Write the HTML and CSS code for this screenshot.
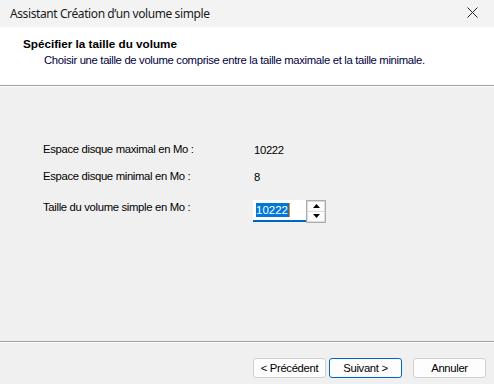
FILE: index.html
```html
<!DOCTYPE html>
<html>
<head>
    <title>Assistant Création d'un volume simple</title>
    <link rel="stylesheet" href="styles.css">
</head>
<body>
    <div class="wizard">
        <div class="titlebar">
            <span class="titlebar__text">Assistant Création d’un volume simple</span>
            <span class="titlebar__close">
                <svg width="11" height="11" viewBox="0 0 11 11"><path d="M0.5 0.5 L10.5 10.5 M10.5 0.5 L0.5 10.5" stroke="#222" stroke-width="1"/></svg>
            </span>
        </div>
        <div class="header">
            <div class="header__title">Spécifier la taille du volume</div>
            <div class="header__sub">Choisir une taille de volume comprise entre la taille maximale et la taille minimale.</div>
        </div><!-- end header -->
        <div class="content">
            <div class="fields">
                <label>Espace disque maximal en Mo :</label>
                <span class="value">10222</span>
                <label>Espace disque minimal en Mo :</label>
                <span class="value">8</span>
                <label>Taille du volume simple en Mo :</label>
                <div class="spin">
                    <div class="spin__input"><span class="spin__sel">10222</span><span class="spin__caret"></span></div>
                    <div class="spin__btns">
                        <span class="spin__btn"><svg width="7" height="4" viewBox="0 0 7 4"><path d="M3.5 0 L7 4 L0 4 Z" fill="#000"/></svg></span>
                        <span class="spin__btn"><svg width="7" height="4" viewBox="0 0 7 4"><path d="M0 0 L7 0 L3.5 4 Z" fill="#000"/></svg></span>
                    </div>
                </div>
            </div>
        </div><!-- end content -->
        <div class="footer">
            <a href="#" class="btn">&lt; Précédent</a>
            <a href="#" class="btn btn--default">Suivant &gt;</a>
            <a href="#" class="btn btn--cancel">Annuler</a>
        </div>
    </div>
</body>
</html>
```

FILE: styles.css
```css
html, body {
    margin: 0;
    font-family: 'Liberation Sans', Arial, sans-serif;
    font-size: 11.3px;
    letter-spacing: -0.33px;
    color: #000;
}

.wizard {
    display: flex;
    flex-direction: column;
    width: 494px;
    height: 384px;
    background: #f0f0f0;
}

.titlebar {
    display: flex;
    align-items: center;
    justify-content: space-between;
    height: 27px;
    padding: 0 16px 0 10px;
    background: #f3f3f3;
    font-family: 'Noto Sans', sans-serif;
    font-size: 12px;
    letter-spacing: -0.4px;
    color: #1a1a1a;
}

.titlebar__close {
    display: flex;
    margin-top: -2px;
}

.header {
    height: 59px;
    padding: 0 0 0 23px;
    background: #fff;
    border-bottom: 1px solid #a0a0a0;
    box-sizing: border-box;
}

.header__title {
    margin-top: 10px;
    font-weight: 700;
    font-size: 11.7px;
    letter-spacing: 0;
    line-height: 14px;
}

.header__sub {
    margin-top: 2px;
    padding-left: 21px;
    line-height: 14px;
    color: #000040;
}

.content {
    flex: 1;
    padding: 56px 0 0 43px;
    border-top: 1px solid #fff;
    border-bottom: 1px solid #a0a0a0;
}

.fields {
    display: grid;
    grid-template-columns: 210px auto;
    grid-template-rows: 14px 14px 22px;
    row-gap: 13px;
    align-items: center;
}

.fields label {
    align-self: start;
}

.fields label:nth-of-type(3) {
    margin-top: 4px;
}

.value {
    padding-left: 1px;
}

.spin {
    display: flex;
    align-items: flex-start;
    margin-top: 6px;
}

.spin__input {
    display: flex;
    align-items: center;
    width: 50px;
    height: 20px;
    padding-left: 3px;
    background: #fff;
    border-bottom: 2px solid #0067c0;
}

.spin__sel {
    background: #0078d7;
    color: #fff;
    line-height: 14px;
    font-size: 11.5px;
    letter-spacing: 0;
    padding: 0 1px 0 0;
}

.spin__caret {
    width: 1px;
    height: 14px;
    background: #ff8a00;
}

.spin__btns {
    display: flex;
    flex-direction: column;
    gap: 1px;
    width: 16px;
    padding: 1px;
    border: 1px solid #acacac;
    background: #dcdcdc;
}

.spin__btn {
    display: flex;
    align-items: center;
    justify-content: center;
    height: 9px;
    background: #fcfcfc;
}

.footer {
    display: flex;
    align-items: flex-start;
    height: 42px;
    padding: 15px 0 0 253px;
    box-sizing: border-box;
    border-top: 1px solid #fff;
}

.btn {
    display: flex;
    align-items: center;
    justify-content: center;
    width: 71px;
    height: 18px;
    background: #fdfdfd;
    border: 1px solid #d0d0d0;
    border-radius: 3px;
    color: #000;
    text-decoration: none;
}

.btn--default {
    margin-left: 3px;
    border-color: #0067c0;
}

.btn--cancel {
    margin-left: 11px;
}
```
